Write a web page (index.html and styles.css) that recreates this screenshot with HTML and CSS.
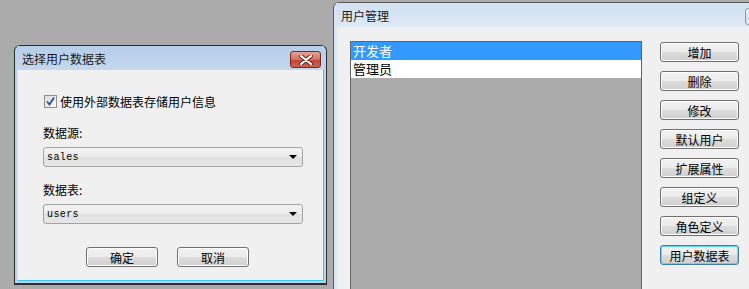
FILE: index.html
```html
<!DOCTYPE html>
<html lang="zh-CN">
<head>
    <meta charset="UTF-8">
    <meta name="viewport" content="width=device-width, initial-scale=1.0">
    <title>用户管理</title>
    <link rel="stylesheet" href="styles.css">
</head>
<body>

<div class="desktop">

    <!-- 选择用户数据表 dialog -->
    <div class="window active pick-window">
        <div class="titlebar">
            <span class="title">选择用户数据表</span>
            <span class="close-btn red">
                <svg width="14" height="10" viewBox="0 0 14 10">
                    <path d="M2 1 L12 9 M12 1 L2 9" stroke="#5a2a24" stroke-width="4" stroke-linecap="round"/>
                    <path d="M2 1 L12 9 M12 1 L2 9" stroke="#fff" stroke-width="2.2" stroke-linecap="round"/>
                </svg>
            </span>
        </div>
        <div class="client">
            <label class="check-row">
                <span class="checkbox">
                    <svg width="11" height="11" viewBox="0 0 11 11">
                        <path d="M2 5.5 L4.5 8.5 L9 1.5" stroke="#2a4fa8" stroke-width="1.8" fill="none"/>
                    </svg>
                </span>
                使用外部数据表存储用户信息
            </label>

            <div class="field-label">数据源:</div>
            <div class="combo">
                <span class="combo-value">sales</span>
                <span class="combo-arrow"></span>
            </div>

            <div class="field-label second">数据表:</div>
            <div class="combo">
                <span class="combo-value">users</span>
                <span class="combo-arrow"></span>
            </div>

            <div class="dialog-buttons">
                <button class="btn wide">确定</button>
                <button class="btn wide">取消</button>
            </div>
        </div>
    </div>

    <!-- 用户管理 dialog -->
    <div class="window inactive users-window">
        <div class="titlebar">
            <span class="title">用户管理</span>
            <span class="close-btn gray">
                <svg width="14" height="10" viewBox="0 0 14 10">
                    <path d="M2 1 L12 9 M12 1 L2 9" stroke="#6a6f78" stroke-width="4" stroke-linecap="round"/>
                    <path d="M2 1 L12 9 M12 1 L2 9" stroke="#f4f4f4" stroke-width="2.2" stroke-linecap="round"/>
                </svg>
            </span>
        </div>
        <div class="client users-client">
            <div class="user-list">
                <div class="user-item selected">开发者</div>
                <div class="user-item">管理员</div>
            </div>
            <div class="side-buttons">
                <button class="btn">增加</button>
                <button class="btn">删除</button>
                <button class="btn">修改</button>
                <button class="btn">默认用户</button>
                <button class="btn">扩展属性</button>
                <button class="btn">组定义</button>
                <button class="btn">角色定义</button>
                <button class="btn focused">用户数据表</button>
            </div>
        </div>
    </div>

</div>
</body>
</html>
```

FILE: styles.css
```css
* {
    margin: 0;
    padding: 0;
    box-sizing: border-box;
    font-family: "Noto Sans CJK SC", "DejaVu Sans", sans-serif;
}

body {
    background-color: #ababab;
    overflow: hidden;
}

.desktop {
    position: relative;
    width: 749px;
    height: 289px;
    overflow: hidden;
}

/* windows */
.window {
    position: absolute;
    display: flex;
    flex-direction: column;
    border: 1px solid #2e2e2e;
    border-radius: 6px 6px 0 0;
    padding: 0 2px 2px 2px;
}

.window.active {
    background: #bad2eb;
}

.window.inactive {
    background: #d9e5f2;
    border-color: #5c5c5c;
}

.pick-window {
    left: 14px;
    top: 45px;
    width: 313px;
    height: 240px;
    border-bottom-width: 2px;
}

.users-window {
    left: 333px;
    top: 2px;
    width: 440px;
    height: 320px;
}

.titlebar {
    height: 24px;
    display: flex;
    align-items: center;
    justify-content: space-between;
    padding-left: 5px;
}

.active .titlebar {
    background: linear-gradient(#b6cee9, #c4d8ee);
}

.inactive .titlebar {
    background: linear-gradient(#d2e0f0, #dde8f4);
}

.title {
    font-size: 12px;
    color: #1a1a1a;
}

.close-btn {
    width: 31px;
    height: 17px;
    border-radius: 3px;
    display: flex;
    align-items: center;
    justify-content: center;
    margin-right: 3px;
    margin-top: 3px;
}

.close-btn.red {
    background: linear-gradient(#e8a497, #d5705f 50%, #c2412f 51%, #cf6450);
    border: 1px solid #6f2a22;
}

.close-btn.gray {
    width: 29px;
    margin-right: -4px;
    background: linear-gradient(#eef2f7, #dde5ee 50%, #d3dce7 51%, #e2e8ef);
    border: 1px solid #8d949e;
}

.client {
    flex: 1;
    background: #f0f0f0;
    border-left: 1px solid #d6e8f3;
    border-right: 1px solid #3cc4ec;
    border-bottom: 1px solid #3cc4ec;
    padding: 0 20px 0 25px;
    font-size: 12px;
    color: #000;
}

/* pick dialog contents */
.check-row {
    display: flex;
    align-items: center;
    gap: 3px;
    margin-top: 24px;
    height: 14px;
    margin-left: 1px;
}

.checkbox {
    width: 13px;
    height: 13px;
    border: 1px solid #8e8f8f;
    background: linear-gradient(135deg, #dcdcdc, #fbfbfb);
    display: flex;
    align-items: center;
    justify-content: center;
}

.field-label {
    margin-top: 17px;
    line-height: 16px;
    height: 16px;
}

.field-label.second {
    margin-top: 15px;
}

.combo {
    margin-top: 6px;
    height: 20px;
    border: 1px solid #a3a3a3;
    border-radius: 3px;
    background: linear-gradient(#f3f3f3, #ececec 50%, #e1e1e1 51%, #e6e6e6);
    display: flex;
    align-items: center;
    justify-content: space-between;
    padding: 0 5px 0 3px;
}

.combo-value {
    font-family: "Liberation Mono", monospace;
    font-size: 10px;
    letter-spacing: 0.4px;
}

.combo-arrow {
    width: 0;
    height: 0;
    border-left: 4px solid transparent;
    border-right: 4px solid transparent;
    border-top: 4px solid #000;
}

.dialog-buttons {
    margin-top: 23px;
    display: flex;
    gap: 19px;
    padding-left: 43px;
}

/* buttons */
.btn {
    width: 79px;
    height: 20px;
    border: 1px solid #707070;
    border-radius: 3px;
    background: linear-gradient(#f2f2f2, #ebebeb 50%, #dddddd 51%, #cfcfcf);
    font-size: 12px;
    color: #000;
    display: flex;
    align-items: center;
    justify-content: center;
    box-shadow: inset 0 0 0 1px #fcfcfc;
}

.btn.wide {
    width: 72px;
}

.btn.focused {
    border-color: #3c7fb1;
    box-shadow: inset 0 0 0 1px #5fd2f8;
}

/* users dialog contents */
.users-client {
    display: flex;
    padding: 14px 0 0 13px;
    gap: 18px;
    border-right: none;
    border-bottom: none;
}

.user-list {
    width: 292px;
    border: 1px solid #646464;
    border-bottom: none;
    background: #ababab;
}

.user-item {
    height: 18px;
    line-height: 18px;
    padding-left: 2px;
    font-size: 13px;
    background: #fff;
}

.user-item.selected {
    background: #3399ff;
    color: #fff;
}

.side-buttons {
    display: flex;
    flex-direction: column;
    gap: 9px;
    padding-top: 1px;
}
```
